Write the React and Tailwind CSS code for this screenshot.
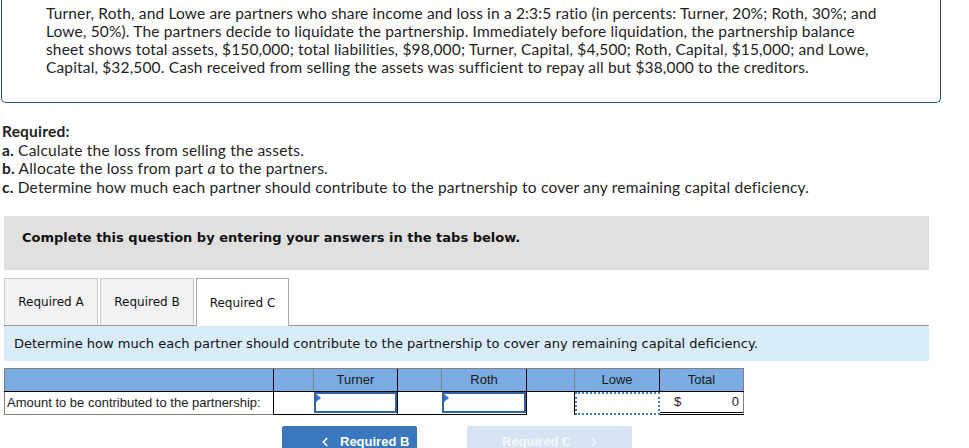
import { ChevronLeft, ChevronRight } from 'lucide-react';

const problem = 'Turner, Roth, and Lowe are partners who share income and loss in a 2:3:5 ratio (in percents: Turner, 20%; Roth, 30%; and Lowe, 50%). The partners decide to liquidate the partnership. Immediately before liquidation, the partnership balance sheet shows total assets, $150,000; total liabilities, $98,000; Turner, Capital, $4,500; Roth, Capital, $15,000; and Lowe, Capital, $32,500. Cash received from selling the assets was sufficient to repay all but $38,000 to the creditors.';

const proxima = { fontFamily: 'Lato, "Open Sans", sans-serif' };

function Tab({ label, active }) {
  if (active) {
    return (
      <div className="-mb-px flex h-[48px] w-[93px] items-center justify-center border border-b-0 border-[#a8a8a8] bg-white text-[12px] text-[#111]">
        {label}
      </div>
    );
  }
  return (
    <div className="flex h-[47px] w-[94px] items-center justify-center border border-b-0 border-[#cccccc] bg-[#f2f2f2] text-[12px] text-[#111]">
      {label}
    </div>
  );
}

function InputCell({ width }) {
  return (
    <div className={`${width} h-full border-b border-r border-b-black border-r-black`}>
      <div className="relative h-[21px] border-2 border-[#2f63a3] bg-white">
        <span className="absolute left-0 top-0 h-0 w-0 border-b-[4px] border-l-[5px] border-t-[4px] border-b-transparent border-l-[#2f74c9] border-t-transparent" />
      </div>
    </div>
  );
}

export default function App() {
  return (
    <div className="min-h-screen w-[969px] overflow-hidden bg-white text-[#1e1e1e]">
      <div className="ml-[1px] w-[940px] rounded-b-[5px] border border-t-0 border-[#23518c] pb-[26px] pl-[44px] pr-[54px] pt-[4px] text-[15.5px] leading-[18px] tracking-[0.15px]" style={proxima}>
        {problem}
      </div>

      <div className="mt-[19px] pl-[2px] text-[15.5px] leading-[18.5px] tracking-[0.2px]" style={proxima}>
        <p className="font-bold">Required:</p>
        <p><b>a.</b> Calculate the loss from selling the assets.</p>
        <p><b>b.</b> Allocate the loss from part <i>a</i> to the partners.</p>
        <p><b>c.</b> Determine how much each partner should contribute to the partnership to cover any remaining capital deficiency.</p>
      </div>

      <div className="ml-[4px] mt-[20px] w-[925px]" style={{ fontFamily: '"DejaVu Sans", Verdana, sans-serif' }}>
        <div className="h-[54px] bg-[#e0e0e0] pl-[18px] pt-[14px] text-[13px] font-bold leading-[16px] text-[#111]">
          Complete this question by entering your answers in the tabs below.
        </div>

        <div className="mt-[8px] flex items-end gap-[2px] border-b border-[#999999]">
          <Tab label="Required A" />
          <Tab label="Required B" />
          <Tab label="Required C" active />
        </div>

        <div className="flex h-[35px] items-center bg-[#d9ecfa] pl-[10px] text-[13px] text-[#111]">
          Determine how much each partner should contribute to the partnership to cover any remaining capital deficiency.
        </div>
      </div>

      <div className="ml-[4px] mt-[7px] w-fit text-[13px]" style={{ fontFamily: '"Liberation Sans", Arial, sans-serif' }}>
        <div className="flex h-[24px] w-fit border-b border-t border-b-black border-t-[#808080] bg-[#7aace3] text-[#1a1a1a]">
          <div className="w-[270px] border-l border-r border-l-[#808080] border-r-black" />
          <div className="w-[40px] border-r border-[#808080]" />
          <div className="flex w-[84px] items-center justify-center border-r border-black">Turner</div>
          <div className="w-[44px] border-r border-[#808080]" />
          <div className="flex w-[85px] items-center justify-center border-r border-black">Roth</div>
          <div className="w-[48px] border-r border-[#808080]" />
          <div className="flex w-[85px] items-center justify-center border-r border-black">Lowe</div>
          <div className="flex w-[84px] items-center justify-center border-r border-[#808080]">Total</div>
        </div>
        <div className="flex h-[23px] w-fit">
          <div className="flex w-[270px] items-center whitespace-nowrap border-b border-l border-r border-b-[#808080] border-l-[#808080] border-r-black pl-[2px] text-[13px] text-[#222]">
            Amount to be contributed to the partnership:
          </div>
          <div className="w-[40px] border-b border-black" />
          <InputCell width="w-[84px]" />
          <div className="w-[44px] border-b border-black" />
          <InputCell width="w-[85px]" />
          <div className="w-[48px] border-r border-black" />
          <div className="w-[85px] border-2 border-dotted border-[#3d7cc4]" />
          <div className="flex w-[84px] items-center justify-between border-b-[3px] border-r border-double border-b-black border-r-[#808080] pl-[14px] pr-[4px] text-[13px]">
            <span>$</span>
            <span>0</span>
          </div>
        </div>
      </div>

      <div className="ml-[282px] mt-[11px] flex gap-[50px] whitespace-nowrap text-[13px] font-bold text-white" style={{ fontFamily: '"Liberation Sans", Arial, sans-serif' }}>
        <div className="flex h-[32px] w-[135px] items-center rounded-t-[2px] bg-[#3a77bc] pl-[36px]">
          <ChevronLeft size={14} strokeWidth={3} className="mr-[8px] shrink-0" />
          Required B
        </div>
        <div className="flex h-[32px] w-[165px] items-center rounded-t-[2px] bg-[#d5e3f2] pl-[35px] text-[#f4f8fc]">
          Required C
          <ChevronRight size={14} strokeWidth={3} className="ml-[16px] shrink-0" />
        </div>
      </div>
    </div>
  );
}
